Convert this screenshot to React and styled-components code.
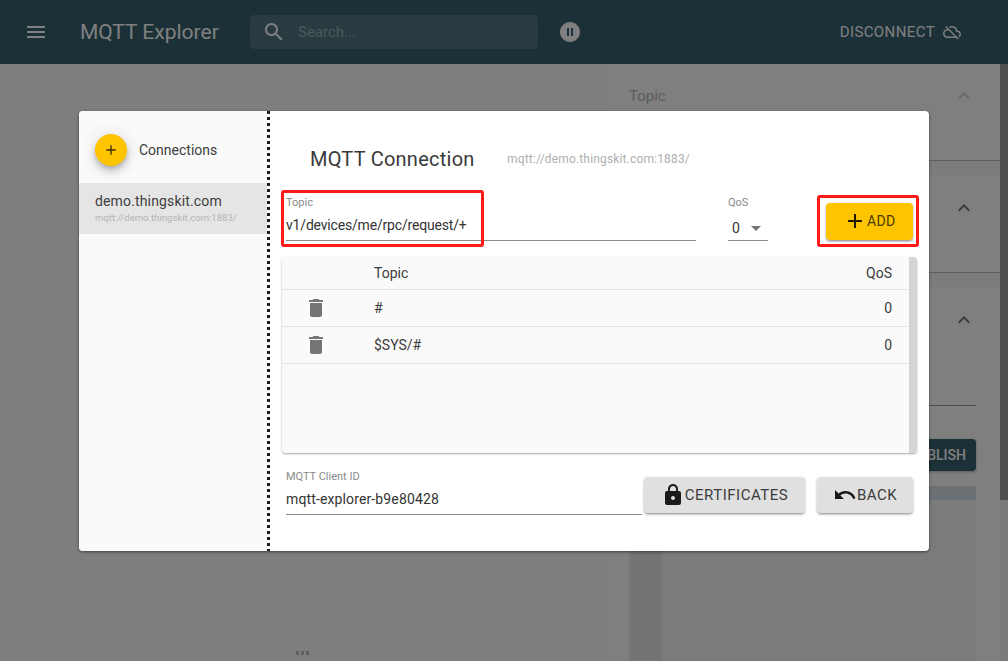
import React from 'react';
import styled, { createGlobalStyle } from 'styled-components';

const Global = createGlobalStyle`
  html, body { margin: 0; padding: 0; height: 100%; overflow: hidden; }
  body { font-family: Roboto, "Liberation Sans", sans-serif; background: #fff; }
`;

const P = {
  menu: 'M3 18h18v-2H3v2zm0-5h18v-2H3v2zm0-7v2h18V6H3z',
  search: 'M15.5 14h-.79l-.28-.27C15.41 12.59 16 11.11 16 9.5 16 5.91 13.09 3 9.5 3S3 5.91 3 9.5 5.91 16 9.5 16c1.61 0 3.09-.59 4.23-1.57l.27.28v.79l5 4.99L20.49 19l-4.99-5zm-6 0C7.01 14 5 11.99 5 9.5S7.01 5 9.5 5 14 7.01 14 9.5 11.99 14 9.5 14z',
  pause: 'M12 2C6.48 2 2 6.48 2 12s4.48 10 10 10 10-4.48 10-10S17.52 2 12 2zm-1 14H9V8h2v8zm4 0h-2V8h2v8z',
  cloudOff: 'M19.35 10.04C18.67 6.59 15.64 4 12 4c-1.48 0-2.85.43-4.01 1.17l1.46 1.46C10.21 6.23 11.08 6 12 6c3.04 0 5.5 2.46 5.5 5.5v.5H19c1.66 0 3 1.34 3 3 0 1.13-.64 2.11-1.56 2.62l1.45 1.45C23.16 18.16 24 16.68 24 15c0-2.64-2.05-4.78-4.65-4.96zM3 5.27l2.75 2.74C2.56 8.15 0 10.77 0 14c0 3.31 2.69 6 6 6h11.73l2 2L21 20.73 4.27 4 3 5.27zM7.73 10l8 8H6c-2.21 0-4-1.79-4-4s1.79-4 4-4h1.73z',
  less: 'M12 8l-6 6 1.41 1.41L12 10.83l4.59 4.58L18 14z',
  add: 'M19 13h-6v6h-2v-6H5v-2h6V5h2v6h6v2z',
  drop: 'M7 10l5 5 5-5z',
  trash: 'M6 19c0 1.1.9 2 2 2h8c1.1 0 2-.9 2-2V7H6v12zM19 4h-3.5l-1-1h-5l-1 1H5v2h14V4z',
  lock: 'M18 8h-1V6c0-2.76-2.24-5-5-5S7 3.24 7 6v2H6c-1.1 0-2 .9-2 2v10c0 1.1.9 2 2 2h12c1.1 0 2-.9 2-2V10c0-1.1-.9-2-2-2zm-6 9c-1.1 0-2-.9-2-2s.9-2 2-2 2 .9 2 2-.9 2-2 2zm3.1-9H8.9V6c0-1.71 1.39-3.1 3.1-3.1 1.71 0 3.1 1.39 3.1 3.1v2z',
  undo: 'M12.5 8c-2.65 0-5.05.99-6.9 2.6L2 7v9h9l-3.62-3.62c1.39-1.16 3.16-1.88 5.12-1.88 3.54 0 6.55 2.31 7.6 5.5l2.37-.78C21.08 11.03 17.15 8 12.5 8z',
};

const Svg = styled.svg`
  width: ${p => p.$size || 24}px;
  height: ${p => p.$size || 24}px;
  fill: ${p => p.$color || 'currentColor'};
  flex: none;
  display: block;
`;
const Icon = ({ d, size, color }) => (
  <Svg viewBox="0 0 24 24" $size={size} $color={color}><path d={d} /></Svg>
);

const Page = styled.div`
  width: 1008px;
  height: 661px;
  display: flex;
  flex-direction: column;
  overflow: hidden;
  position: relative;
`;

const Header = styled.header`
  height: 64px;
  flex: none;
  background: #36606e;
  color: #fff;
  display: flex;
  align-items: center;
  padding: 0 24px;
  box-sizing: border-box;
`;
const MenuSlot = styled.div`
  width: 56px;
  display: flex;
`;
const AppTitle = styled.div`
  font-size: 21px;
  font-weight: 400;
  width: 170px;
  white-space: nowrap;
`;
const SearchBox = styled.div`
  width: 288px;
  height: 34px;
  border-radius: 4px;
  background: rgba(255, 255, 255, 0.15);
  display: flex;
  align-items: center;
  padding-left: 12px;
  box-sizing: border-box;
  color: #fff;
`;
const SearchHint = styled.span`
  margin-left: 12px;
  font-size: 15px;
  color: rgba(255, 255, 255, 0.42);
`;
const PauseSlot = styled.div`
  margin-left: 20px;
  display: flex;
`;
const Grow = styled.div`
  flex: 1;
`;
const Disconnect = styled.div`
  display: flex;
  align-items: center;
  gap: 8px;
  font-size: 15px;
  letter-spacing: 0.4px;
  font-weight: 400;
  margin-right: 23px;
  color: #fff;
`;

const Body = styled.div`
  flex: 1;
  display: flex;
  min-height: 0;
`;
const Tree = styled.main`
  width: 606px;
  flex: none;
  background: #fdfdfd;
  display: flex;
  flex-direction: column;
  justify-content: flex-end;
  padding-left: 296px;
  box-sizing: border-box;
`;
const Ellipsis = styled.div`
  display: flex;
  gap: 2px;
  margin-bottom: 6px;
`;
const EllipsisDot = styled.i`
  width: 3px;
  height: 4px;
  background: #c0c0c0;
`;
const Sidebar = styled.aside`
  width: 394px;
  flex: none;
  background: #f8f8f8;
  display: flex;
  flex-direction: column;
`;
const Panel = styled.section`
  height: 97px;
  flex: none;
  box-sizing: border-box;
  margin-bottom: 15px;
  padding: 0 24px 0 23px;
  background: #ffffff;
  border-bottom: 1px solid #bcbcbc;
`;
const PanelOpen = styled.section`
  flex: 1;
  display: flex;
  flex-direction: column;
  min-height: 0;
  padding: 0 24px 0 23px;
  background: #ffffff;
`;
const PanelHead = styled.div`
  height: 64px;
  flex: none;
  display: flex;
  align-items: center;
  justify-content: space-between;
  font-size: 15px;
  color: ${p => (p.$dim ? '#b8b8b8' : '#333')};
`;
const HeadChevron = styled.div`
  display: flex;
`;
const BackInput = styled.div`
  height: 54px;
  flex: none;
  box-sizing: border-box;
  border-bottom: 1px solid #9a9a9a;
`;
const PublishRow = styled.div`
  margin-top: 33px;
  display: flex;
  justify-content: flex-end;
  flex: none;
`;
const PublishBtn = styled.div`
  height: 32px;
  width: 90px;
  background: #36606e;
  color: #fff;
  border-radius: 4px;
  font-size: 14px;
  font-weight: 500;
  display: flex;
  align-items: center;
  justify-content: flex-end;
  padding-right: 10px;
  box-sizing: border-box;
  box-shadow: 0 1px 3px rgba(0, 0, 0, 0.3);
`;
const Strip = styled.div`
  margin-top: 15px;
  height: 14px;
  flex: none;
  background: #d6e0ea;
`;
const Columns = styled.div`
  flex: 1;
  display: flex;
  background: #f6f6f6;
`;
const ColumnDark = styled.div`
  width: 33px;
  background: #e8e8e8;
`;
const Scrollbar = styled.div`
  width: 8px;
  flex: none;
  background: #f5f5f5;
`;
const ScrollThumb = styled.div`
  height: 436px;
  background: #9e9e9e;
`;

const Backdrop = styled.div`
  position: absolute;
  inset: 0;
  background: rgba(0, 0, 0, 0.5);
  display: flex;
  align-items: center;
  justify-content: center;
`;
const Dialog = styled.div`
  width: 850px;
  height: 440px;
  background: #fff;
  border-radius: 4px;
  overflow: hidden;
  display: flex;
  box-shadow: 0 1px 3px rgba(0, 0, 0, 0.5);
`;
const LeftPane = styled.nav`
  width: 188px;
  flex: none;
  background: #fafafa;
`;
const Divider = styled.div`
  width: 3px;
  flex: none;
  background: repeating-linear-gradient(to bottom, #1c1c1c 0 3px, transparent 3px 6px);
`;
const ConnHead = styled.div`
  height: 72px;
  display: flex;
  align-items: flex-start;
  padding: 23px 0 0 16px;
  box-sizing: border-box;
`;
const Fab = styled.div`
  width: 32px;
  height: 32px;
  border-radius: 50%;
  background: #ffc400;
  color: #3a2c00;
  display: flex;
  align-items: center;
  justify-content: center;
  box-shadow: 0 3px 5px -1px rgba(0,0,0,.2), 0 6px 10px 0 rgba(0,0,0,.14), 0 1px 18px 0 rgba(0,0,0,.12);
`;
const ConnTitle = styled.div`
  margin-left: 12px;
  font-size: 14px;
  line-height: 32px;
  color: #3c3c3c;
`;
const ConnItem = styled.div`
  height: 51px;
  background: #e5e5e5;
  padding: 10px 0 0 16px;
  box-sizing: border-box;
`;
const ConnName = styled.div`
  font-size: 14px;
  line-height: 17px;
  letter-spacing: 0.15px;
  color: #3e3e3e;
`;
const ConnUrl = styled.div`
  font-size: 9.5px;
  line-height: 12px;
  margin-top: 2px;
  letter-spacing: 0.03px;
  color: #b4b4b4;
  white-space: nowrap;
`;

const RightPane = styled.div`
  flex: 1;
  min-width: 0;
  padding: 32px 0 0 12px;
  display: flex;
  flex-direction: column;
`;
const TitleRow = styled.div`
  height: 32px;
  flex: none;
  display: flex;
  align-items: center;
  padding-left: 28px;
`;
const Title = styled.h2`
  margin: 0;
  font-size: 20px;
  font-weight: 400;
  letter-spacing: 0.25px;
  color: #3a3a3a;
  width: 197px;
  white-space: nowrap;
`;
const TitleUrl = styled.span`
  font-size: 12px;
  letter-spacing: 0.16px;
  color: #b0b0b0;
  white-space: nowrap;
`;
const FormRow = styled.div`
  margin-top: 21px;
  height: 45px;
  flex: none;
  display: flex;
  padding-left: 4px;
`;
const Field = styled.div`
  width: ${p => p.$w}px;
  height: 45px;
  flex: none;
  position: relative;
  box-sizing: border-box;
  border-bottom: 1px solid #8c8c8c;
  margin-right: ${p => p.$mr || 0}px;
`;
const Label = styled.div`
  font-size: 11px;
  line-height: 12px;
  padding-top: 1px;
  color: #8a8a8a;
`;
const Value = styled.div`
  font-size: 14px;
  line-height: 18px;
  margin-top: 7px;
  letter-spacing: ${p => p.$ls || 0}px;
  color: #333;
  white-space: nowrap;
  display: flex;
  align-items: center;
  justify-content: space-between;
`;
const QosValue = styled(Value)`
  padding-left: 4px;
`;
const AddBtn = styled.div`
  width: 87px;
  height: 37px;
  margin-top: 7px;
  flex: none;
  background: #ffc400;
  border-radius: 4px;
  color: #4a3b00;
  font-size: 14px;
  letter-spacing: 0.3px;
  display: flex;
  align-items: center;
  padding-left: 17px;
  box-sizing: border-box;
  position: relative;
  box-shadow: 0 1px 3px 0 rgba(0,0,0,.25), 0 2px 2px 0 rgba(0,0,0,.14), 0 3px 1px -2px rgba(0,0,0,.12);
`;
const AddIconSlot = styled.span`
  display: flex;
  color: #1f1a00;
`;
const Highlight = styled.div`
  position: absolute;
  border: 3px solid #ff1a1a;
  border-radius: 3px;
  box-sizing: border-box;
  pointer-events: none;
  left: ${p => p.$l}px;
  top: ${p => p.$t}px;
  width: ${p => p.$w}px;
  height: ${p => p.$h}px;
`;
const TableCard = styled.div`
  margin-top: 16px;
  width: 635px;
  height: 196px;
  flex: none;
  display: flex;
  background: #fafafa;
  border-radius: 4px;
  overflow: hidden;
  box-shadow: 0 1px 2px rgba(0,0,0,.35);
`;
const Rows = styled.div`
  flex: 1;
  min-width: 0;
`;
const TableBar = styled.div`
  width: 8px;
  flex: none;
  margin-left: 1px;
  background: #d4d4d4;
`;
const Row = styled.div`
  display: flex;
  align-items: center;
  height: ${p => (p.$head ? 33 : 37)}px;
  box-sizing: border-box;
  border-bottom: 1px solid #e4e4e4;
  font-size: 14px;
  color: #3c3c3c;
`;
const TrashCell = styled.div`
  width: 92px;
  flex: none;
  padding-left: 22px;
  box-sizing: border-box;
  display: flex;
`;
const TopicCell = styled.div`
  flex: 1;
`;
const QosCell = styled.div`
  padding-right: 16px;
`;
const BottomRow = styled.div`
  margin-top: 17px;
  display: flex;
  align-items: flex-start;
  padding-left: 4px;
`;
const GreyBtn = styled.div`
  height: 36px;
  width: ${p => p.$w}px;
  flex: none;
  margin-top: 7px;
  margin-left: ${p => p.$ml}px;
  background: #e0e0e0;
  border-radius: 4px;
  color: #3c3c3c;
  font-size: 15px;
  letter-spacing: 0.5px;
  display: flex;
  align-items: center;
  justify-content: center;
  box-shadow: 0 1px 3px 0 rgba(0,0,0,.2), 0 2px 2px 0 rgba(0,0,0,.14), 0 3px 1px -2px rgba(0,0,0,.12);
`;
const BtnIcon = styled.span`
  display: flex;
  color: #1a1a1a;
`;

export default function App() {
  return (
    <Page>
      <Global />
      <Header>
        <MenuSlot><Icon d={P.menu} /></MenuSlot>
        <AppTitle>MQTT Explorer</AppTitle>
        <SearchBox>
          <Icon d={P.search} />
          <SearchHint>Search...</SearchHint>
        </SearchBox>
        <PauseSlot><Icon d={P.pause} /></PauseSlot>
        <Grow />
        <Disconnect>DISCONNECT <Icon d={P.cloudOff} size={18} /></Disconnect>
      </Header>
      <Body>
        <Tree>
          <Ellipsis><EllipsisDot /><EllipsisDot /><EllipsisDot /></Ellipsis>
        </Tree>
        <Sidebar>
          <Panel>
            <PanelHead $dim>
              Topic
              <HeadChevron><Icon d={P.less} color="#d0d0d0" /></HeadChevron>
            </PanelHead>
          </Panel>
          <Panel>
            <PanelHead>
              <span />
              <HeadChevron><Icon d={P.less} color="#757575" /></HeadChevron>
            </PanelHead>
          </Panel>
          <PanelOpen>
            <PanelHead>
              <span />
              <HeadChevron><Icon d={P.less} color="#757575" /></HeadChevron>
            </PanelHead>
            <BackInput />
            <PublishRow><PublishBtn>PUBLISH</PublishBtn></PublishRow>
            <Strip />
            <Columns><ColumnDark /></Columns>
          </PanelOpen>
        </Sidebar>
        <Scrollbar><ScrollThumb /></Scrollbar>
      </Body>
      <Backdrop>
        <Dialog>
          <LeftPane>
            <ConnHead>
              <Fab><Icon d={P.add} size={16} /></Fab>
              <ConnTitle>Connections</ConnTitle>
            </ConnHead>
            <ConnItem>
              <ConnName>demo.thingskit.com</ConnName>
              <ConnUrl>mqtt://demo.thingskit.com:1883/</ConnUrl>
            </ConnItem>
          </LeftPane>
          <Divider />
          <RightPane>
            <TitleRow>
              <Title>MQTT Connection</Title>
              <TitleUrl>mqtt://demo.thingskit.com:1883/</TitleUrl>
            </TitleRow>
            <FormRow>
              <Field $w={410} $mr={32}>
                <Label>Topic</Label>
                <Value $ls={-0.18}>v1/devices/me/rpc/request/+</Value>
                <Highlight $l={-5} $t={-6} $w={203} $h={57} />
              </Field>
              <Field $w={40} $mr={58}>
                <Label>QoS</Label>
                <QosValue>0<Icon d={P.drop} color="#757575" /></QosValue>
              </Field>
              <AddBtn>
                <AddIconSlot><Icon d={P.add} /></AddIconSlot>
                ADD
                <Highlight $l={-9} $t={-8} $w={102} $h={52} />
              </AddBtn>
            </FormRow>
            <TableCard>
              <Rows>
                <Row $head>
                  <TrashCell />
                  <TopicCell>Topic</TopicCell>
                  <QosCell>QoS</QosCell>
                </Row>
                <Row>
                  <TrashCell><Icon d={P.trash} color="#757575" /></TrashCell>
                  <TopicCell>#</TopicCell>
                  <QosCell>0</QosCell>
                </Row>
                <Row>
                  <TrashCell><Icon d={P.trash} color="#757575" /></TrashCell>
                  <TopicCell>$SYS/#</TopicCell>
                  <QosCell>0</QosCell>
                </Row>
              </Rows>
              <TableBar />
            </TableCard>
            <BottomRow>
              <Field $w={356}>
                <Label>MQTT Client ID</Label>
                <Value $ls={0.13}>mqtt-explorer-b9e80428</Value>
              </Field>
              <GreyBtn $w={161} $ml={2}>
                <BtnIcon><Icon d={P.lock} /></BtnIcon>
                CERTIFICATES
              </GreyBtn>
              <GreyBtn $w={96} $ml={12}>
                <BtnIcon><Icon d={P.undo} /></BtnIcon>
                BACK
              </GreyBtn>
            </BottomRow>
          </RightPane>
        </Dialog>
      </Backdrop>
    </Page>
  );
}
